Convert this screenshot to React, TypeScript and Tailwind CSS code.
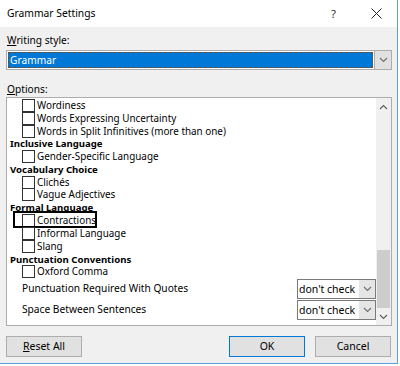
import React from "react";

type Row =
  | { kind: "header"; label: string }
  | { kind: "check"; label: string; focused?: boolean };

const ROWS: Row[] = [
  { kind: "check", label: "Wordiness" },
  { kind: "check", label: "Words Expressing Uncertainty" },
  { kind: "check", label: "Words in Split Infinitives (more than one)" },
  { kind: "header", label: "Inclusive Language" },
  { kind: "check", label: "Gender-Specific Language" },
  { kind: "header", label: "Vocabulary Choice" },
  { kind: "check", label: "Clichés" },
  { kind: "check", label: "Vague Adjectives" },
  { kind: "header", label: "Formal Language" },
  { kind: "check", label: "Contractions", focused: true },
  { kind: "check", label: "Informal Language" },
  { kind: "check", label: "Slang" },
  { kind: "header", label: "Punctuation Conventions" },
  { kind: "check", label: "Oxford Comma" },
];

const Chevron = ({ up = false, className = "" }: { up?: boolean; className?: string }) => (
  <svg width="9" height="6" viewBox="0 0 9 6" className={className}>
    <path
      d={up ? "M1 5 L4.5 1.5 L8 5" : "M1 1 L4.5 4.5 L8 1"}
      fill="none"
      stroke="currentColor"
      strokeWidth="1.2"
    />
  </svg>
);

const DropDown = ({ value }: { value: string }) => (
  <div className="flex h-[20px] w-[79px] border border-[#7a7a7a] bg-white">
    <div className="flex-1 whitespace-nowrap pl-[1px] text-[10.5px] leading-[18px]">{value}</div>
    <div className="flex w-[16px] items-center justify-center bg-[#e5e5e5] text-[#707070]">
      <Chevron />
    </div>
  </div>
);

const Btn = ({ children, primary = false }: { children: React.ReactNode; primary?: boolean }) => (
  <button
    className={`h-[21px] w-[76px] border bg-[#e1e1e1] text-[10.5px] ${
      primary ? "border-[#0078d7]" : "border-[#adadad]"
    }`}
  >
    {children}
  </button>
);

export default function App() {
  return (
    <div
      className="h-[366px] w-[400px] bg-white text-black"
      style={{ fontFamily: '"Noto Sans", "Open Sans", sans-serif' }}
    >
      <div className="flex h-[364px] w-[398px] flex-col border-r border-b border-[#5aa0e0] bg-[#f0f0f0]">
        {/* title bar */}
        <div className="flex h-[27px] items-center bg-white pl-[7px] text-[10.3px]">
          <span className="flex-1">Grammar Settings</span>
          <span className="w-[40px] text-[11.5px] text-[#333]">?</span>
          <svg width="11" height="11" viewBox="0 0 11 11" className="mr-[15px]">
            <path d="M0.5 0.5 L10.5 10.5 M10.5 0.5 L0.5 10.5" stroke="#222" strokeWidth="1" />
          </svg>
        </div>

        <div className="flex flex-1 flex-col px-[6px] text-[9.9px]">
          <div className="mt-[6px] pl-[1px] text-[10.2px] leading-[14px]">
            <span className="underline">W</span>riting style:
          </div>
          <div className="mt-[3px] flex h-[20px] w-[386px] border border-[#adadad] bg-white">
            <div className="m-[1px] flex-1 border border-dashed border-[#7a4a20] bg-[#0078d7] pl-[1px] text-[10.2px] leading-[14px] text-white">
              Grammar
            </div>
            <div className="flex w-[17px] items-center justify-center border-l border-[#adadad] bg-[#e1e1e1] text-[#707070]">
              <Chevron />
            </div>
          </div>

          <div className="mt-[12px] pl-[1px] text-[10.2px] leading-[14px]">
            <span className="underline">O</span>ptions:
          </div>
          <div className="mt-[1px] flex h-[229px] w-[386px] border border-[#adadad] bg-white">
            <div className="flex-1 overflow-hidden pt-[1px]">
              {ROWS.map((r) =>
                r.kind === "header" ? (
                  <div key={r.label} className="h-[12.8px] pl-[3px] text-[9.6px] font-bold leading-[13px]">
                    {r.label}
                  </div>
                ) : (
                  <div key={r.label} className="relative flex h-[12.8px] items-center">
                    <div className="ml-[15px] h-[13px] w-[13px] shrink-0 border border-[#333] bg-white" />
                    <span className="ml-[2px] whitespace-nowrap leading-[13px]">{r.label}</span>
                    {r.focused && (
                      <div className="absolute top-[-3px] left-[6px] h-[17px] w-[84px] border-2 border-black" />
                    )}
                  </div>
                )
              )}
              <div className="flex h-[21px] items-center justify-between">
                <span className="pl-[15px] text-[10.2px]">Punctuation Required With Quotes</span>
                <DropDown value="don't check" />
              </div>
              <div className="flex h-[21px] items-center justify-between">
                <span className="pl-[15px] text-[10.2px]">Space Between Sentences</span>
                <DropDown value="don't check" />
              </div>
            </div>
            <div className="flex w-[15px] flex-col bg-[#f0f0f0] text-[#606060]">
              <div className="flex h-[17px] items-center justify-center">
                <Chevron up />
              </div>
              <div className="flex-1" />
              <div className="mx-[1px] h-[58px] bg-[#cdcdcd]" />
              <div className="flex h-[17px] items-center justify-center">
                <Chevron />
              </div>
            </div>
          </div>

          <div className="mt-[10px] flex">
            <Btn>
              <span className="underline">R</span>eset All
            </Btn>
            <div className="flex-1" />
            <Btn primary>OK</Btn>
            <div className="w-[10px]" />
            <Btn>Cancel</Btn>
          </div>
        </div>
      </div>
    </div>
  );
}
